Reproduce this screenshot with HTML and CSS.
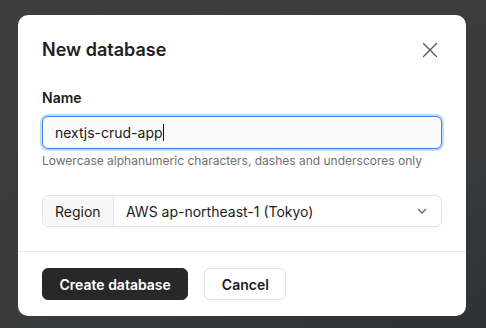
FILE: index.html
```html
<!DOCTYPE html>
<html lang="en">
<head>
    <meta charset="UTF-8" />
    <meta name="viewport" content="width=device-width, initial-scale=1.0"/>
    <title>New database</title>
    <link rel="stylesheet" href="styles.css">
</head>
<body>
    <div class="modal">
        <div class="modal-header">
            <h2>New database</h2>
            <button class="close" aria-label="Close">
                <svg width="16" height="16" viewBox="0 0 16 16" fill="none" stroke="#555" stroke-width="1.3" stroke-linecap="round">
                    <path d="M1.5 1.5 14.5 14.5M14.5 1.5 1.5 14.5"/>
                </svg>
            </button>
        </div>

        <div class="modal-body">
            <label for="name">Name</label>
            <div class="input focus">nextjs-crud-app<span class="caret"></span></div>
            <p class="hint">Lowercase alphanumeric characters, dashes and underscores only</p>

            <div class="select-group">
                <span class="addon">Region</span>
                <div class="select">
                    <span>AWS ap-northeast-1 (Tokyo)</span>
                    <svg width="12" height="12" viewBox="0 0 12 12" fill="none" stroke="#666" stroke-width="1.3" stroke-linecap="round" stroke-linejoin="round">
                        <path d="M2.5 4.5 6 8l3.5-3.5"/>
                    </svg>
                </div>
            </div>
        </div>

        <div class="modal-footer">
            <button class="btn btn-primary">Create database</button>
            <button class="btn btn-secondary">Cancel</button>
        </div>
    </div>
</body>
</html>
```

FILE: styles.css
```css
* {
    box-sizing: border-box;
}
body {
    margin: 0;
    height: 328px;
    overflow: hidden;
    font-family: Inter, "Noto Sans", sans-serif;
    background: linear-gradient(160deg, #3d3d3d 0%, #3b3b3b 60%, #2c3238 100%);
    padding: 15px 20px 0 18px;
    color: #1c1c1c;
}
.modal {
    width: 448px;
    height: 301px;
    background: #fff;
    border-radius: 10px;
    display: flex;
    flex-direction: column;
}
.modal-header {
    display: flex;
    align-items: center;
    justify-content: space-between;
    padding: 21px 28px 0 24px;
}
h2 {
    margin: 0;
    font-size: 18px;
    line-height: 28px;
    font-weight: 600;
    color: #1f1f1f;
}
.close {
    border: none;
    background: none;
    padding: 0;
    display: flex;
}
.modal-body {
    padding: 24px 24px 24px;
    border-bottom: 1px solid #ebebeb;
}
label {
    display: block;
    font-size: 14px;
    line-height: 20px;
    font-weight: 600;
    margin-bottom: 8px;
}
.input {
    height: 33px;
    border: 1px solid #3b82e6;
    box-shadow: 0 0 0 2px rgba(59, 130, 246, 0.3);
    border-radius: 6px;
    background: #fafafa;
    padding: 0 12px;
    font-size: 14px;
    display: flex;
    align-items: center;
    color: #1c1c1c;
}
.caret {
    display: inline-block;
    width: 1px;
    height: 17px;
    background: #111;
}
.hint {
    margin: 4px 0 0;
    font-size: 12px;
    line-height: 16px;
    color: #707070;
}
.select-group {
    margin-top: 26px;
    height: 32px;
    display: flex;
    border: 1px solid #e4e4e4;
    border-radius: 6px;
    font-size: 14px;
    overflow: hidden;
}
.addon {
    width: 71px;
    background: #f7f7f7;
    border-right: 1px solid #e4e4e4;
    display: flex;
    align-items: center;
    padding-left: 12px;
}
.select {
    flex: 1;
    display: flex;
    align-items: center;
    justify-content: space-between;
    padding: 0 13px 0 12px;
}
.modal-footer {
    display: flex;
    gap: 16px;
    padding: 16px 24px;
}
.btn {
    height: 32px;
    padding: 0 16.5px;
    border-radius: 6px;
    font-family: inherit;
    font-size: 14px;
    font-weight: 600;
    cursor: pointer;
}
.btn-primary {
    background: #282828;
    color: #fff;
    border: 1px solid #282828;
}
.btn-secondary {
    background: #fff;
    color: #1c1c1c;
    border: 1px solid #e2e2e2;
}
```
